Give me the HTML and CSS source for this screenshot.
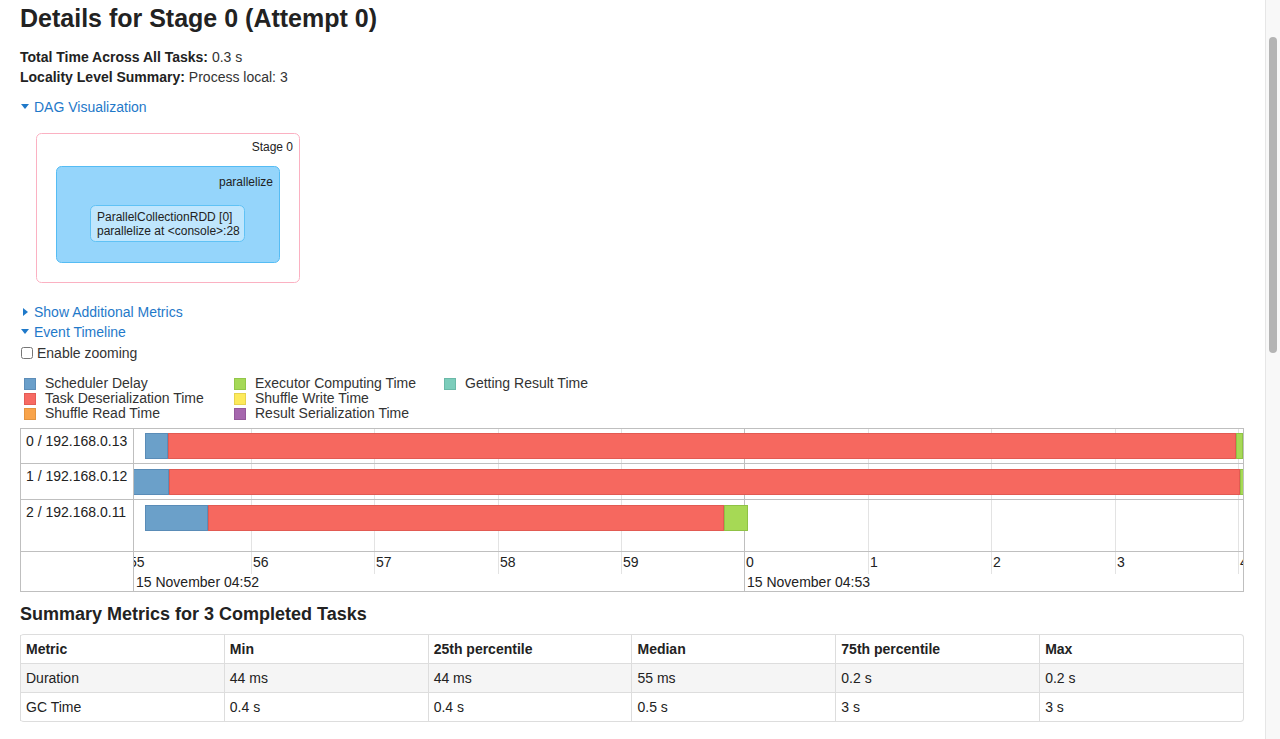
FILE: index.html
```html
<!DOCTYPE html>
<html>
<head>
<meta charset="utf-8">
<title>Stage 0</title>
<link rel="stylesheet" href="styles.css">
</head>
<body>
<div class="page">
  <h3 class="title">Details for Stage 0 (Attempt 0)</h3>
  <ul class="summary">
    <li><strong>Total Time Across All Tasks:</strong> 0.3 s</li>
    <li><strong>Locality Level Summary:</strong> Process local: 3</li>
  </ul>

  <a class="toggle"><span class="arrow-down"></span>DAG Visualization</a>
  <div class="dag">
    <svg width="264" height="150" viewBox="0 0 264 150">
      <rect class="stage-box" x="0.5" y="0.5" width="263" height="149" rx="5" ry="5"></rect>
      <text class="dag-text" x="257" y="18" text-anchor="end">Stage 0</text>
      <rect class="op-box" x="20.5" y="33.5" width="223" height="96" rx="5" ry="5"></rect>
      <text class="dag-text" x="237" y="53" text-anchor="end">parallelize</text>
      <rect class="node-box" x="54.5" y="72.5" width="154" height="36" rx="5" ry="5"></rect>
      <text class="dag-text" x="61" y="88">ParallelCollectionRDD [0]</text>
      <text class="dag-text" x="61" y="102">parallelize at &lt;console&gt;:28</text>
    </svg>
  </div>

  <a class="toggle"><span class="arrow-right"></span>Show Additional Metrics</a>
  <a class="toggle"><span class="arrow-down"></span>Event Timeline</a>
  <label class="zoom"><input type="checkbox" class="zoom-box">Enable zooming</label>

  <div class="legend">
    <div class="legend-item"><span class="sw sw-sched"></span>Scheduler Delay</div>
    <div class="legend-item"><span class="sw sw-deser"></span>Task Deserialization Time</div>
    <div class="legend-item"><span class="sw sw-sread"></span>Shuffle Read Time</div>
    <div class="legend-item"><span class="sw sw-exec"></span>Executor Computing Time</div>
    <div class="legend-item"><span class="sw sw-swrite"></span>Shuffle Write Time</div>
    <div class="legend-item"><span class="sw sw-ser"></span>Result Serialization Time</div>
    <div class="legend-item"><span class="sw sw-get"></span>Getting Result Time</div>
  </div>

  <div class="timeline">
    <div class="tl-labels">
      <div class="tl-label row-a">0 / 192.168.0.13</div>
      <div class="tl-label row-b">1 / 192.168.0.12</div>
      <div class="tl-label row-c">2 / 192.168.0.11</div>
      <div class="tl-label row-axis"></div>
    </div>
    <div class="tl-canvas">
      <div class="grid-minor" style="left:117px"></div>
      <div class="grid-minor" style="left:240px"></div>
      <div class="grid-minor" style="left:364px"></div>
      <div class="grid-minor" style="left:487px"></div>
      <div class="grid-major" style="left:610px"></div>
      <div class="grid-minor" style="left:734px"></div>
      <div class="grid-minor" style="left:857px"></div>
      <div class="grid-minor" style="left:981px"></div>
      <div class="grid-minor" style="left:1104px"></div>

      <div class="tl-row row-a">
        <div class="bar" style="left:11px">
          <div class="seg seg-sched" style="width:23px"></div>
          <div class="seg seg-deser" style="width:1068px"></div>
          <div class="seg seg-exec" style="width:7px"></div>
        </div>
      </div>
      <div class="tl-row row-b">
        <div class="bar" style="left:-1px">
          <div class="seg seg-sched" style="width:36px"></div>
          <div class="seg seg-deser" style="width:1071px"></div>
          <div class="seg seg-exec" style="width:4px"></div>
        </div>
      </div>
      <div class="tl-row row-c">
        <div class="bar" style="left:11px">
          <div class="seg seg-sched" style="width:63px"></div>
          <div class="seg seg-deser" style="width:516px"></div>
          <div class="seg seg-exec" style="width:24px"></div>
        </div>
      </div>
      <div class="tl-row row-axis">
        <span class="tick" style="left:-5px">55</span>
        <span class="tick" style="left:119px">56</span>
        <span class="tick" style="left:242px">57</span>
        <span class="tick" style="left:366px">58</span>
        <span class="tick" style="left:489px">59</span>
        <span class="tick" style="left:612px">0</span>
        <span class="tick" style="left:736px">1</span>
        <span class="tick" style="left:859px">2</span>
        <span class="tick" style="left:983px">3</span>
        <span class="tick" style="left:1106px">4</span>
        <span class="major-label" style="left:2px">15 November 04:52</span>
        <span class="major-label" style="left:613px">15 November 04:53</span>
      </div>
    </div>
  </div>

  <h4 class="section">Summary Metrics for 3 Completed Tasks</h4>
  <table class="metrics">
    <thead>
      <tr><th>Metric</th><th>Min</th><th>25th percentile</th><th>Median</th><th>75th percentile</th><th>Max</th></tr>
    </thead>
    <tbody>
      <tr class="odd"><td>Duration</td><td>44 ms</td><td>44 ms</td><td>55 ms</td><td>0.2 s</td><td>0.2 s</td></tr>
      <tr><td>GC Time</td><td>0.4 s</td><td>0.4 s</td><td>0.5 s</td><td>3 s</td><td>3 s</td></tr>
    </tbody>
  </table>
</div>
<div class="scrollbar"><div class="thumb"></div></div>
</body>
</html>
```

FILE: styles.css
```css
html {
  overflow: hidden;
  background: #fff;
}
body {
  margin: 0;
  font-family: "Liberation Sans", Arial, Helvetica, sans-serif;
  font-size: 14px;
  line-height: 20px;
  color: #333;
}
.page {
  width: 1224px;
  padding-left: 20px;
}
.title {
  margin: -2px 0 0 0;
  font-size: 25px;
  line-height: 40px;
  font-weight: bold;
  color: #222;
}
.summary {
  list-style: none;
  margin: 9px 0 10px 0;
  padding: 0;
}
.summary strong {
  color: #222;
}
.toggle {
  display: block;
  color: #1f79c9;
  line-height: 20px;
  cursor: pointer;
}
.arrow-down {
  display: inline-block;
  width: 0;
  height: 0;
  border-left: 4px solid transparent;
  border-right: 4px solid transparent;
  border-top: 5px solid #1f79c9;
  margin: 0 5px 3px 1px;
  vertical-align: middle;
}
.arrow-right {
  display: inline-block;
  width: 0;
  height: 0;
  border-top: 4px solid transparent;
  border-bottom: 4px solid transparent;
  border-left: 5px solid #1f79c9;
  margin: 0 6px 2px 3px;
  vertical-align: middle;
}
.dag {
  margin: 16px 0 19px 16px;
  height: 150px;
}
.dag svg {
  display: block;
}
.stage-box {
  fill: #fff;
  stroke: #fbb1c2;
  stroke-width: 1;
}
.op-box {
  fill: #95d5fb;
  stroke: #55bcf4;
  stroke-width: 1;
}
.node-box {
  fill: #bfe6fd;
  stroke: #60c2f5;
  stroke-width: 1;
}
.dag-text {
  font-family: "Liberation Sans", Arial, sans-serif;
  font-size: 12px;
  fill: #222;
}
.zoom {
  display: flex;
  align-items: center;
  margin-top: 1px;
  height: 20px;
}
.zoom-box {
  width: 12px;
  height: 12px;
  margin: 0 4px 0 1px;
}
.legend {
  margin-top: 13px;
  padding-left: 4px;
  display: grid;
  grid-template-columns: 210px 210px 210px;
  grid-template-rows: 15px 15px 15px;
  grid-auto-flow: column;
  line-height: 15px;
}
.legend-item {
  display: flex;
  align-items: center;
  white-space: nowrap;
}
.sw {
  display: inline-block;
  width: 10px;
  height: 10px;
  border: 1px solid;
  margin-right: 9px;
  flex: none;
}
.sw-sched { background: #6a9fca; border-color: #5d8db8; }
.sw-deser { background: #f76a63; border-color: #e35c56; }
.sw-sread { background: #f9a44b; border-color: #e39440; }
.sw-exec { background: #a5d957; border-color: #93c64a; }
.sw-swrite { background: #fdea5a; border-color: #e6d34f; }
.sw-ser { background: #a667ae; border-color: #94599b; }
.sw-get { background: #7ccdbb; border-color: #6bb9a8; }

.timeline {
  margin-top: 7px;
  border: 1px solid #bfbfbf;
  display: flex;
  height: 162px;
}
.tl-labels {
  width: 112px;
  border-right: 1px solid #bfbfbf;
  flex: none;
}
.tl-label {
  box-sizing: border-box;
  padding: 3px 0 0 5px;
  line-height: 18px;
  border-bottom: 1px solid #bfbfbf;
  color: #222;
}
.row-a { height: 35px; }
.row-b { height: 36px; }
.row-c { height: 52px; }
.row-axis { height: 39px; border-bottom: none; }
.tl-canvas {
  position: relative;
  flex: 1;
  overflow: hidden;
}
.grid-minor {
  position: absolute;
  top: 0;
  width: 1px;
  height: 145px;
  background: #e3e3e3;
}
.grid-major {
  position: absolute;
  top: 0;
  bottom: 0;
  width: 1px;
  background: #bfbfbf;
}
.tl-row {
  position: relative;
  box-sizing: border-box;
  border-bottom: 1px solid #bfbfbf;
}
.tl-row.row-axis {
  border-bottom: none;
}
.bar {
  position: absolute;
  top: 4px;
  height: 26px;
  display: flex;
}
.row-b .bar, .row-c .bar {
  top: 5px;
}
.seg {
  box-sizing: border-box;
  height: 100%;
  border: 1px solid;
  flex: none;
}
.seg-sched { background: #6ba0c9; border-color: #5a8cb7; }
.seg-deser { background: #f6685f; border-color: #e25a52; }
.seg-exec { background: #a6d955; border-color: #8fc245; }
.tick {
  position: absolute;
  top: 1px;
  line-height: 18px;
  color: #222;
}
.major-label {
  position: absolute;
  top: 21px;
  line-height: 18px;
  color: #222;
  white-space: nowrap;
}
.section {
  margin: 11px 0 10px 0;
  padding-top: 1px;
  font-size: 18px;
  line-height: 20px;
  font-weight: bold;
  color: #222;
}
.metrics {
  width: 1224px;
  table-layout: fixed;
  border-collapse: separate;
  border-spacing: 0;
  border: 1px solid #ddd;
  border-left: none;
  border-radius: 4px;
}
.metrics th, .metrics td {
  text-align: left;
  padding: 4px 5px;
  line-height: 20px;
  border-left: 1px solid #ddd;
  border-top: 1px solid #ddd;
  color: #222;
}
.metrics thead th {
  border-top: none;
  font-weight: bold;
}
.metrics tr.odd td {
  background: #f5f5f5;
}
.scrollbar {
  position: fixed;
  top: 0;
  right: 0;
  width: 14px;
  height: 100%;
  background: #f8f8f8;
  border-left: 1px solid #e6e6e6;
}
.thumb {
  position: absolute;
  top: 37px;
  left: 3px;
  width: 8px;
  height: 316px;
  border-radius: 4px;
  background: #b4b4b4;
}
```
